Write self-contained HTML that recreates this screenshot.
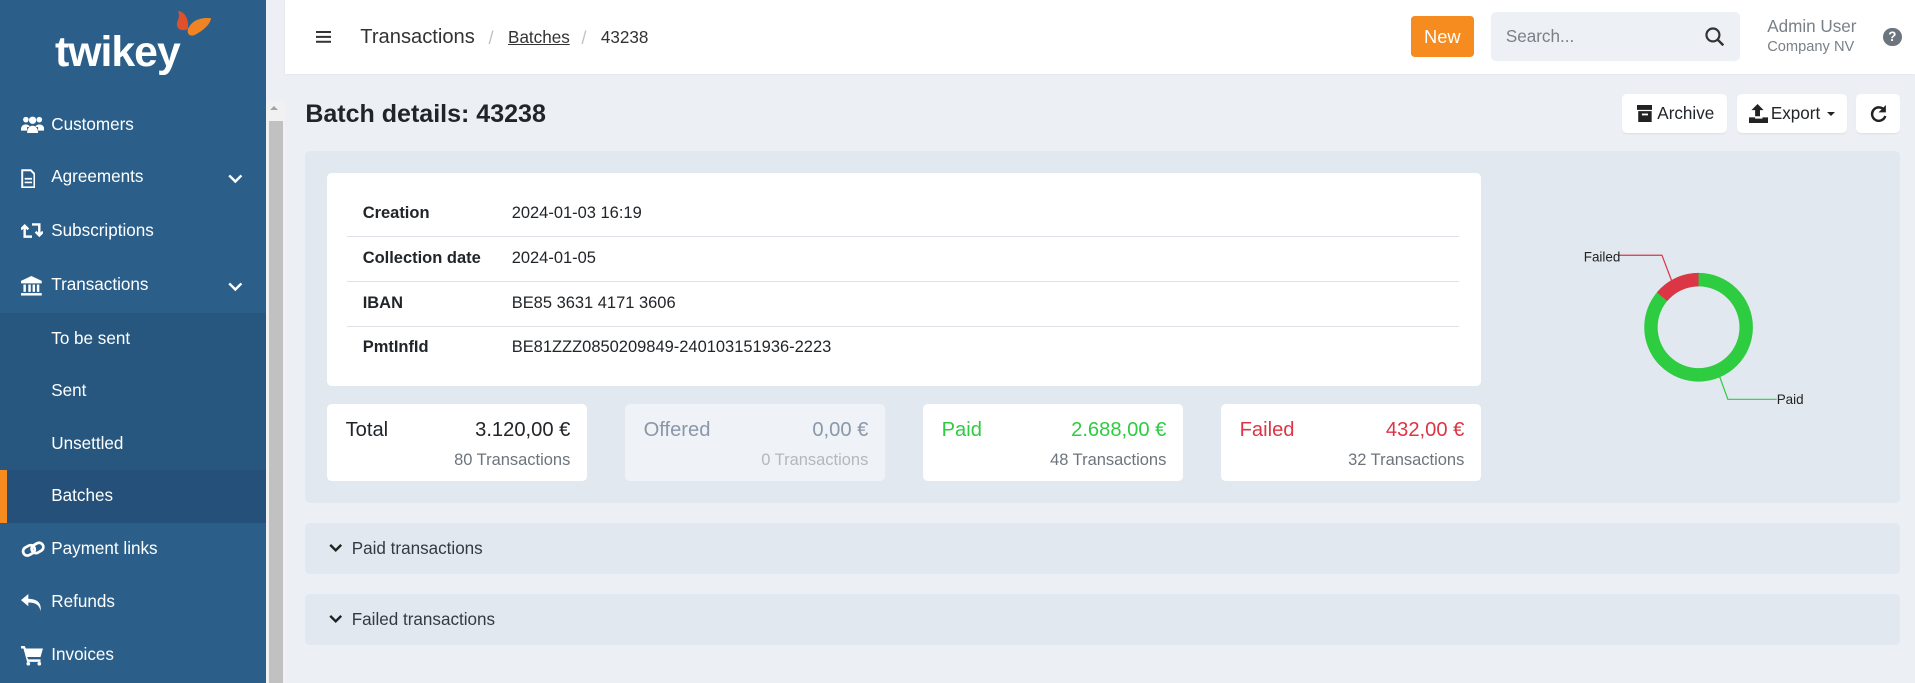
<!DOCTYPE html>
<html><head><meta charset="utf-8"><style>
html{zoom:1.22131}
body{margin:0;width:1568px;height:559px;overflow:hidden;background:#ecf0f5;font-family:"Liberation Sans",sans-serif;color:#212529;position:relative}
.abs{position:absolute}
#sb{left:0;top:0;width:218px;height:559px;background:#2b5f8a;color:#fff}
.nav{position:absolute;left:0;width:218px;height:43px;font-size:14px;line-height:43px}
.nav span{position:absolute;left:42px}
.nav svg{position:absolute;left:17px;top:14px}
.nav .chev{position:absolute;left:187px;top:18px}
#scroll{left:218px;top:83px;width:15px;height:476px;background:#f1f1f1}
#thumb{left:220px;top:99px;width:12px;height:460px;background:#c1c1c1}
#hdr{left:233px;top:0;width:1335px;height:61px;background:#fff;box-shadow:0 1px 2px rgba(0,0,0,.05)}
.card{background:#fff;border-radius:4px;position:absolute}
.btn{background:#fff;border-radius:4px;position:absolute;top:77px;height:32px;font-size:14px;line-height:32px;box-shadow:0 1px 1px rgba(0,0,0,.05)}
.row{position:absolute;left:16px;right:18px;height:37px;font-size:13.5px;line-height:37px;border-bottom:1px solid #dee2e6}
.row b{position:absolute;left:13px}
.row span{position:absolute;left:135px}
.stat{position:absolute;top:331px;width:213px;height:63px;border-radius:4px;background:#fff}
.stat .t{position:absolute;left:15px;top:12px;font-size:16.5px}
.stat .a{position:absolute;right:14px;top:12px;font-size:16.5px}
.stat .s{position:absolute;right:14px;top:38px;font-size:13.5px;color:#6c757d}
.acc{position:absolute;left:250px;width:1306px;height:42px;background:#e2e8f0;border-radius:4px;font-size:14px;line-height:42px;color:#343a40}
.acc span{position:absolute;left:38px}
.acc svg{position:absolute;left:19px;top:17px}
</style></head><body>
<div id="sb" class="abs">
 <div class="abs" style="left:45px;top:22px;font-size:35px;font-weight:bold;letter-spacing:-0.8px;line-height:42px">twikey</div>
 <svg class="abs" style="left:141px;top:5px" width="40" height="40" viewBox="0 0 40 40"><path d="M5 4c6 1 9 7 8 15-5 2-9 0-9-4 0-3 3-5 1-11z" fill="#e0502a"/><path d="M13 19c3-7 10-10 19-9-1 6-8 11-14 14-3 1-6-1-5-5z" fill="#f08422"/></svg>
 <div class="nav" style="top:81px"><svg width="19" height="14" viewBox="0 0 19 14" fill="#fff"><circle cx="4" cy="3" r="2.3"/><circle cx="15" cy="3" r="2.3"/><circle cx="9.5" cy="3.5" r="3"/><path d="M0 11c0-3 2-4 4-4s3 1 3 2H5v3H0zM19 11c0-3-2-4-4-4s-3 1-3 2h2v3h5zM5 14c0-4 2-6 4.5-6S14 10 14 14z"/></svg><span>Customers</span></div>
 <div class="nav" style="top:124px"><svg width="12" height="16" viewBox="0 0 12 16"><path d="M1 1h7l3 3v11H1z" fill="none" stroke="#fff" stroke-width="1.6"/><path d="M3 8h6M3 11h6" stroke="#fff" stroke-width="1.4"/></svg><span>Agreements</span><svg class="chev" width="12" height="9" viewBox="0 0 12 9"><path d="M1 2l5 5 5-5" fill="none" stroke="#fff" stroke-width="2"/></svg></div>
 <div class="nav" style="top:168px"><svg width="18" height="14" viewBox="0 0 18 14"><path d="M3 13V3M0 6l3-3 3 3M3 12h6M15 1v10M12 8l3 3 3-3M15 2H9" fill="none" stroke="#fff" stroke-width="2"/></svg><span>Subscriptions</span></div>
 <div class="nav" style="top:212px"><svg width="17" height="16" viewBox="0 0 17 16" fill="#fff"><path d="M8.5 0L17 4v2H0V4z"/><rect x="2" y="7" width="2" height="6"/><rect x="6" y="7" width="2" height="6"/><rect x="9.5" y="7" width="2" height="6"/><rect x="13" y="7" width="2" height="6"/><rect x="0" y="14" width="17" height="2"/></svg><span>Transactions</span><svg class="chev" width="12" height="9" viewBox="0 0 12 9"><path d="M1 2l5 5 5-5" fill="none" stroke="#fff" stroke-width="2"/></svg></div>
 <div class="abs" style="left:0;top:256px;width:218px;height:172px;background:#27577f"></div>
 <div class="nav" style="top:256px"><span>To be sent</span></div>
 <div class="nav" style="top:299px"><span>Sent</span></div>
 <div class="nav" style="top:342px"><span>Unsettled</span></div>
 <div class="abs" style="left:0;top:385px;width:218px;height:43px;background:#245079"></div>
 <div class="abs" style="left:0;top:385px;width:6px;height:43px;background:#f68b1f"></div>
 <div class="nav" style="top:385px"><span>Batches</span></div>
 <div class="nav" style="top:428px"><svg width="20" height="16" viewBox="0 0 20 16"><rect x="1.5" y="5" width="10" height="7" rx="3.5" transform="rotate(-30 6.5 8.5)" fill="none" stroke="#fff" stroke-width="2.2"/><rect x="8.5" y="3" width="10" height="7" rx="3.5" transform="rotate(-30 13.5 6.5)" fill="none" stroke="#fff" stroke-width="2.2"/></svg><span>Payment links</span></div>
 <div class="nav" style="top:472px"><svg width="18" height="15" viewBox="0 0 18 15"><path d="M6 0L0 5l6 5V7c6 0 9 2 10 7 1-6-2-10-10-10z" fill="#fff"/></svg><span>Refunds</span></div>
 <div class="nav" style="top:515px"><svg width="18" height="16" viewBox="0 0 18 16" fill="#fff"><path d="M0 0h3l1 2h14l-2 7H5l1 2h10v2H5L2 2H0z"/><circle cx="6" cy="14.5" r="1.5"/><circle cx="15" cy="14.5" r="1.5"/></svg><span>Invoices</span></div>
</div>
<div id="scroll" class="abs"></div>
<div class="abs" style="left:221px;top:87px;width:0;height:0;border:4px solid transparent;border-bottom:4px solid #a3a3a3;border-top:0"></div>
<div id="thumb" class="abs"></div>

<div id="hdr" class="abs">
 <div class="abs" style="left:26px;top:25px;width:12px;height:2px;background:#333;box-shadow:0 4px 0 #333,0 8px 0 #333"></div>
 <div class="abs" style="left:62px;top:21px;font-size:16.5px;color:#333">Transactions</div>
 <div class="abs" style="left:167px;top:22px;font-size:15px;color:#c0c4c8">/</div>
 <div class="abs" style="left:183px;top:23px;font-size:14px;color:#333;text-decoration:underline">Batches</div>
 <div class="abs" style="left:243px;top:22px;font-size:15px;color:#c0c4c8">/</div>
 <div class="abs" style="left:259px;top:23px;font-size:14px;color:#333">43238</div>
 <div class="abs" style="left:922px;top:13px;width:52px;height:34px;background:#f68b1f;border-radius:3px;color:#fff;font-size:15px;line-height:34px;text-align:center">New</div>
 <div class="abs" style="left:988px;top:10px;width:204px;height:40px;background:#edf0f4;border-radius:4px">
  <div class="abs" style="left:12px;top:12px;font-size:14px;color:#7a8088">Search...</div>
  <svg class="abs" style="left:175px;top:12px" width="16" height="16" viewBox="0 0 16 16"><circle cx="6.5" cy="6.5" r="5.3" fill="none" stroke="#333" stroke-width="1.8"/><path d="M10.5 10.5l4.5 4.5" stroke="#333" stroke-width="2"/></svg>
 </div>
 <div class="abs" style="left:1214px;top:14px;font-size:14px;color:#7a8088">Admin User</div>
 <div class="abs" style="left:1214px;top:32px;font-size:12px;color:#7a8088">Company NV</div>
 <div class="abs" style="left:1309px;top:23px;width:15px;height:15px;border-radius:50%;background:#6c757d;color:#fff;font-size:11px;font-weight:bold;line-height:15px;text-align:center">?</div>
</div>

<div class="abs" style="left:250px;top:82px;font-size:20.5px;font-weight:bold;color:#212529">Batch details: 43238</div>
<div class="btn" style="left:1328px;width:86px"><svg class="abs" style="left:12px;top:9px" width="13" height="14" viewBox="0 0 13 14" fill="#222"><rect x="0" y="0" width="13" height="4"/><path d="M1 5h11v9H1z"/><rect x="4" y="7" width="5" height="1.5" fill="#fff"/></svg><span class="abs" style="left:29px">Archive</span></div>
<div class="btn" style="left:1422px;width:90px"><svg class="abs" style="left:10px;top:8px" width="16" height="16" viewBox="0 0 16 16" fill="#222"><path d="M7 0L2 5h3v5h4V5h3z"/><path d="M0 11h5v1h6v-1h5v5H0z"/></svg><span class="abs" style="left:28px">Export</span><div class="abs" style="left:74px;top:15px;border:4px solid transparent;border-top:4px solid #222;border-bottom:0"></div></div>
<div class="btn" style="left:1520px;width:36px"><svg class="abs" style="left:11px;top:9px" width="14" height="14" viewBox="0 0 14 14"><path d="M11.5 4A5.5 5.5 0 1 0 12.5 9" fill="none" stroke="#222" stroke-width="2"/><path d="M13 0v6H7z" fill="#222"/></svg></div>

<div class="abs" style="left:250px;top:124px;width:1306px;height:288px;background:#e2e8f0;border-radius:4px"></div>
<div class="card" style="left:268px;top:142px;width:945px;height:174px">
 <div class="row" style="top:14px"><b>Creation</b><span>2024-01-03 16:19</span></div>
 <div class="row" style="top:51px"><b>Collection date</b><span>2024-01-05</span></div>
 <div class="row" style="top:88px"><b>IBAN</b><span>BE85 3631 4171 3606</span></div>
 <div class="row" style="top:124px;border:0"><b>PmtInfId</b><span>BE81ZZZ0850209849-240103151936-2223</span></div>
</div>
<div class="stat" style="left:268px"><div class="t">Total</div><div class="a">3.120,00 €</div><div class="s">80 Transactions</div></div>
<div class="stat" style="left:512px;background:#eff2f7;color:#8a98a8"><div class="t">Offered</div><div class="a">0,00 €</div><div class="s" style="color:#b2b8be">0 Transactions</div></div>
<div class="stat" style="left:756px;color:#2ecc40"><div class="t">Paid</div><div class="a">2.688,00 €</div><div class="s">48 Transactions</div></div>
<div class="stat" style="left:1000px;color:#dc3545"><div class="t">Failed</div><div class="a">432,00 €</div><div class="s">32 Transactions</div></div>

<svg class="abs" style="left:1280px;top:190px" width="220" height="150" viewBox="1280 190 220 150">
 <circle cx="1391" cy="268" r="39" fill="none" stroke="#2ecc40" stroke-width="11"/>
 <path d="M1391 229 A39 39 0 0 0 1361.1 243" fill="none" stroke="#dc3545" stroke-width="11"/>
 <path d="M1326 209H1361L1369 230" fill="none" stroke="#dc3545" stroke-width="1"/>
 <path d="M1407 305L1415 327H1455" fill="none" stroke="#2ecc40" stroke-width="1"/>
 <text x="1297" y="214" font-size="11" font-family="Liberation Sans" fill="#222">Failed</text>
 <text x="1455" y="331" font-size="11" font-family="Liberation Sans" fill="#222">Paid</text>
</svg>

<div class="acc" style="top:428px"><svg width="11" height="8" viewBox="0 0 11 8"><path d="M1 1.5l4.5 4.5 4.5-4.5" fill="none" stroke="#222" stroke-width="2"/></svg><span>Paid transactions</span></div>
<div class="acc" style="top:486px"><svg width="11" height="8" viewBox="0 0 11 8"><path d="M1 1.5l4.5 4.5 4.5-4.5" fill="none" stroke="#222" stroke-width="2"/></svg><span>Failed transactions</span></div>
</body></html>
